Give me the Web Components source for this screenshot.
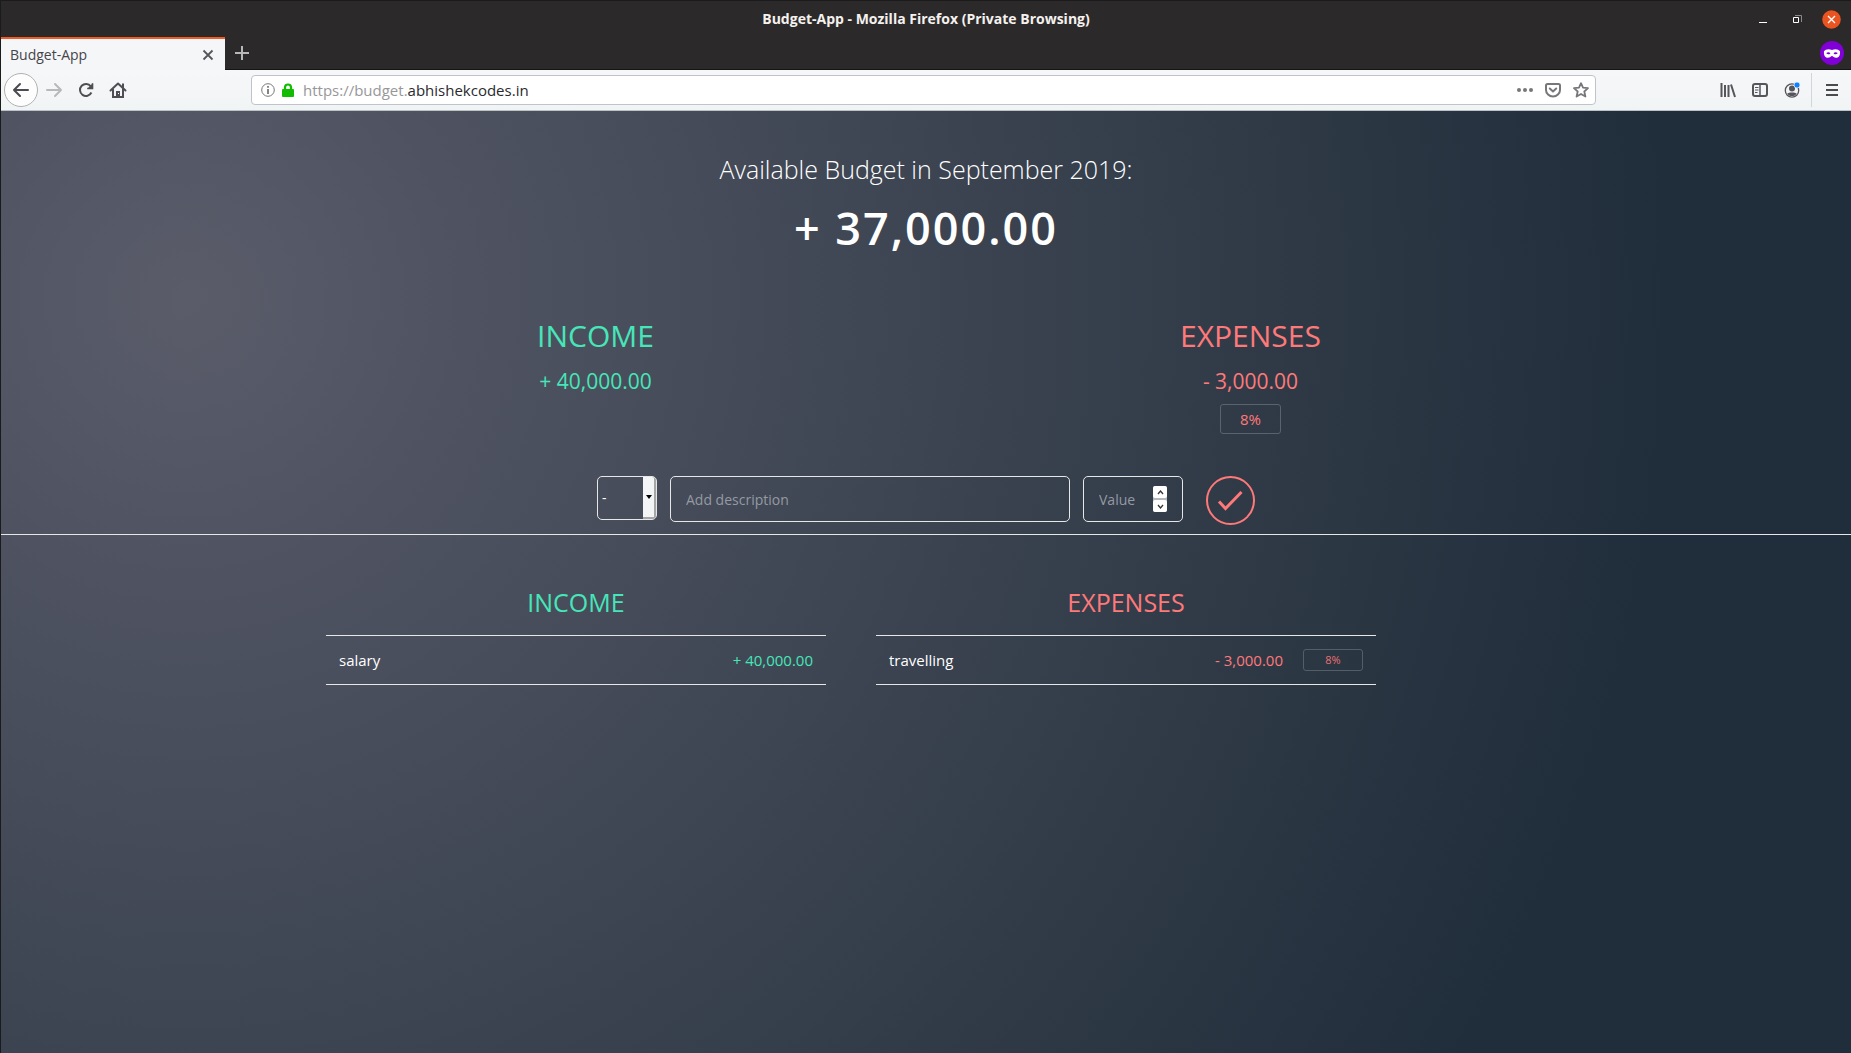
<!DOCTYPE html>
<html lang="en">
<head>
<meta charset="utf-8">
<title>Budget-App</title>
<style>
  html, body { margin: 0; }
  body { min-height: 100vh; display: flex; font-family: "Open Sans", "Noto Sans", sans-serif; }
</style>
</head>
<body>
<browser-window>
  <budget-app></budget-app>
</browser-window>

<script>
const define = (name, html, setup) => {
  const tpl = document.createElement('template');
  tpl.innerHTML = html;
  customElements.define(name, class extends HTMLElement {
    constructor() {
      super();
      this.attachShadow({ mode: 'open' }).append(tpl.content.cloneNode(true));
    }
    connectedCallback() { if (setup) setup(this, this.shadowRoot); }
  });
};

const reset = `
  *, *::before, *::after { box-sizing: border-box; }
  button, input, select { font: inherit; color: inherit; margin: 0; padding: 0; border: 0; background: none; outline: 0; }
  button { display: flex; align-items: center; justify-content: center; }
  svg { display: block; }
  h1, h2, p, ul { margin: 0; padding: 0; font-weight: 400; }
`;

/* Title bar: window caption and window controls */
define('window-titlebar', `
<style>${reset}
  :host { display: grid; grid-template-columns: 1fr auto 1fr; align-items: center; height: 36px; padding: 0 10px; color: #f4f1ee; }
  h1 { grid-column: 2; font: 700 14px/20px "Open Sans", "Noto Sans", sans-serif; }
  .controls { display: flex; justify-content: flex-end; gap: 15px; }
  button { width: 19px; height: 19px; }
</style>
<h1><slot></slot></h1>
<div class="controls">
  <button aria-label="Minimize"><svg width="19" height="19"><path d="M5 12.5h8" stroke="#fff"/></svg></button>
  <button aria-label="Restore"><svg width="19" height="19" fill="none"><path d="M7 5.500h6.500v6.500" stroke="#8b8989"/><path d="M5.500 7.500h5v5h-5z" stroke="#fff"/></svg></button>
  <button aria-label="Close"><svg width="19" height="19"><circle cx="9.500" cy="9.500" r="9.300" fill="#e95420"/><path d="M6 6l7 7M13 6l-7 7" stroke="#fff" stroke-width="1.300"/></svg></button>
</div>`);

define('tab-strip', `
<style>${reset}
  :host { display: flex; align-items: stretch; height: 33px; border-bottom: 1px solid #161515; padding-right: 7px; }
  .tab { display: flex; align-items: center; justify-content: space-between; width: 224px; margin-bottom: -1px; padding: 0 11px 0 9px; background: #f5f6f8; border-top: 2px solid #f15a24; color: #45454a; font-size: 14px; line-height: 20px; }
  .add { width: 34px; }
  .mask { margin-left: auto; width: 24px; }
</style>
<div class="tab"><slot></slot><button aria-label="Close tab"><svg width="12" height="12"><path d="M1.500 1.500l9 9M10.500 1.500l-9 9" stroke="#55565a" stroke-width="1.800"/></svg></button></div>
<button class="add" aria-label="New tab"><svg width="14" height="14"><path d="M7 0v14M0 7h14" stroke="#b9b8b8" stroke-width="2"/></svg></button>
<button class="mask" aria-label="Private browsing"><svg width="24" height="24"><circle cx="12" cy="12" r="12" fill="#8000d7"/><path fill="#fff" fill-rule="evenodd" d="M4 10.200C5.500 8 9 7.600 12 9c3-1.400 6.500-1 8 1.200.400 3.800-1 6.600-3.900 6.600-2 0-3.100-1.900-4.100-1.900s-2.100 1.900-4.100 1.900c-2.900 0-4.300-2.800-3.900-6.600zM6.300 12.300c.800 1.300 3 1.400 4.100.200-.900-1.600-3-1.700-4.100-.200zM13.600 12.500c1.100 1.200 3.300 1.100 4.100-.200-1.100-1.500-3.200-1.400-4.100.200z"/></svg></button>`);

define('nav-toolbar', `
<style>${reset}
  :host { display: flex; align-items: center; height: 41px; padding: 0 3px; background: linear-gradient(#f6f7f9, #f1f4f5); border-bottom: 1px solid #bcc2c6; }
  .nav { display: flex; align-items: center; width: 247px; }
  .nav button { width: 32px; height: 34px; }
  .nav .back { width: 34px; border: 1px solid #b1b1b1; border-radius: 50%; background: #fdfdfe; }
  .url { flex: 1; display: flex; align-items: center; height: 30px; padding: 0 6px 0 9px; background: #fff; border: 1px solid #bfc3ca; border-radius: 4px; }
  .address { flex: 1; padding-left: 9px; font-size: 15px; line-height: 20px; color: #97979a; }
  .address b { font-weight: 400; color: #2a2a2e; }
  .lock { margin-left: 7px; }
  .actions { display: flex; gap: 12px; }
  .tools { display: flex; align-items: center; margin-left: 116px; }
  .tools button { width: 32px; height: 32px; }
  .sep { width: 1px; height: 34px; margin: 0 4px 0 3px; background: #d3d6d9; }
</style>
<div class="nav">
  <button class="back" aria-label="Back"><svg width="18" height="16" fill="none" stroke="#4a4a4f" stroke-width="2" stroke-linecap="round" stroke-linejoin="round"><path d="M2 8h14M8 2L2 8l6 6"/></svg></button>
  <button aria-label="Forward"><svg width="18" height="16" fill="none" stroke="#b8b9bb" stroke-width="2" stroke-linecap="round" stroke-linejoin="round"><path d="M2 8h14M10 2l6 6-6 6"/></svg></button>
  <button aria-label="Reload"><svg width="16" height="16" fill="none" stroke="#4f4f53" stroke-width="2"><path d="M13.400 10.500a6 6 0 1 1-.6-6.200"/><path d="M14.500 1.500v5h-5z" fill="#4f4f53" stroke="none"/><path d="M14.500 1.200v5.300H9.200" stroke-width="1.600"/></svg></button>
  <button aria-label="Home"><svg width="18" height="16"><path d="M1.500 8.500L9 1.500l7.500 7" fill="none" stroke="#4f4f53" stroke-width="2" stroke-linecap="round" stroke-linejoin="round"/><path d="M4 7v8h10V7" fill="none" stroke="#4f4f53" stroke-width="2"/><path d="M7 9h4v6H7z" fill="#4f4f53"/><path d="M13 1.500h2v5h-2z" fill="#4f4f53"/><path d="M9 11.500h1" stroke="#fff"/></svg></button>
</div>
<div class="url">
  <svg width="14" height="14" fill="none" stroke="#77777b"><circle cx="7" cy="7" r="6.300"/><path d="M7 6v5M7 3v1.700" stroke-width="1.800"/></svg>
  <svg class="lock" width="12" height="14"><path d="M3 7V4.500a3 3 0 0 1 6 0V7" fill="none" stroke="#12bc00" stroke-width="2.200"/><rect y="6" width="12" height="8" rx="1" fill="#12bc00"/></svg>
  <div class="address">https://budget.<b>abhishekcodes.in</b></div>
  <div class="actions">
    <button aria-label="Page actions"><svg width="16" height="16" fill="#77777b"><circle cx="2" cy="8" r="2"/><circle cx="8" cy="8" r="2"/><circle cx="14" cy="8" r="2"/></svg></button>
    <button aria-label="Save to Pocket"><svg width="16" height="16" fill="none" stroke="#77777b" stroke-width="2" stroke-linejoin="round"><path d="M2.500 2h11a1.500 1.500 0 0 1 1.500 1.500V8A7 6.500 0 0 1 1 8V3.500A1.500 1.500 0 0 1 2.500 2z"/><path d="M4.800 6.500L8 9.500l3.200-3" stroke-linecap="round"/></svg></button>
    <button aria-label="Bookmark"><svg width="16" height="16" fill="none" stroke="#77777b" stroke-width="1.800" stroke-linejoin="round"><path d="M8 1.200l2 4.500 5 .5-3.700 3.300 1.100 5L8 12l-4.400 2.500 1.100-5L1 6.200l5-.5z"/></svg></button>
  </div>
</div>
<div class="tools">
  <button aria-label="Library"><svg width="16" height="16" fill="none" stroke="#55555a" stroke-width="2"><path d="M1.500 1v14M5 3v12M8.500 3v12M11 2.500L15 15"/></svg></button>
  <button aria-label="Sidebars"><svg width="16" height="16" fill="none" stroke="#55555a" stroke-width="2"><rect x="1" y="2" width="14" height="12" rx="2"/><path d="M8 2v12" stroke-width="1.500"/><path d="M3 5.500h3.500M3 8h3.500M3 10.500h2.500" stroke-width="1"/></svg></button>
  <button aria-label="Account"><svg width="16" height="16"><circle cx="8" cy="8.500" r="6.700" fill="none" stroke="#55555a" stroke-width="1.300"/><circle cx="8" cy="6.500" r="3" fill="#55555a"/><path d="M3.200 11.500c1.500-1.500 8-1.500 9.600 0-1.500 3.300-8 3.500-9.600 0z" fill="#55555a"/><circle cx="13" cy="3" r="3" fill="#0a84ff" stroke="#f5f6f8" stroke-width=".7"/></svg></button>
  <span class="sep"></span>
  <button aria-label="Menu"><svg width="12" height="12" stroke="#4a4a4f" stroke-width="2"><path d="M0 1h12M0 6h12M0 11h12"/></svg></button>
</div>`);

define('browser-window', `
<style>${reset}
  :host { flex: 1; display: flex; flex-direction: column; min-height: 100vh; box-sizing: border-box; border: solid #1c1b1b; border-width: 1px 0 0 1px; background: #2c292a; }
  ::slotted(*) { flex: 1; }
</style>
<window-titlebar>Budget-App - Mozilla Firefox (Private Browsing)</window-titlebar>
<tab-strip>Budget-App</tab-strip>
<nav-toolbar></nav-toolbar>
<slot></slot>`);

define('percent-badge', `
<style>
  :host { display: flex; align-items: center; justify-content: center; box-sizing: border-box; width: 61px; height: 30px; border: 1px solid #59636d; border-radius: 3px; font-size: 15px; line-height: 20px; }
  :host([small]) { width: 60px; height: 22px; font-size: 11px; line-height: 16px; opacity: .9; }
</style><slot></slot>`);

define('total-column', `
<style>${reset}
  :host { flex: 1; display: flex; flex-direction: column; align-items: center; color: var(--tone); }
  h2 { font-size: 30px; line-height: 40px; }
  p { margin-top: 11px; font-size: 21px; line-height: 28px; }
  ::slotted(percent-badge) { margin-top: 9px; }
</style>
<h2><slot name="title"></slot></h2>
<p><slot name="amount"></slot></p>
<slot></slot>`);

define('budget-summary', `
<style>${reset}
  :host { display: block; padding-top: 41px; color: #fff; }
  .title { text-align: center; font-weight: 300; font-size: 25px; line-height: 34px; }
  .value { margin-top: 11px; text-align: center; font-weight: 600; font-size: 45px; line-height: 62px; letter-spacing: 2px; }
  .totals { display: flex; max-width: 1316px; padding-right: 6px; margin: 57px auto 0; }
</style>
<h1 class="title">Available Budget in September 2019:</h1>
<p class="value">+ 37,000.00</p>
<div class="totals">
  <total-column style="--tone: var(--income)"><span slot="title">INCOME</span><span slot="amount">+ 40,000.00</span></total-column>
  <total-column style="--tone: var(--expense)"><span slot="title">EXPENSES</span><span slot="amount">- 3,000.00</span><percent-badge>8%</percent-badge></total-column>
</div>`);

define('entry-form', `
<style>${reset}
  :host { display: block; margin-top: 42px; padding-bottom: 9px; border-bottom: 1px solid #e7e7e7; }
  form { display: flex; justify-content: center; align-items: flex-start; gap: 13px; font-size: 14px; line-height: 20px; color: #fff; }
  .type { display: flex; width: 60px; height: 44px; border: 1px solid #e7e7e7; border-radius: 5px; overflow: hidden; }
  select { flex: 1; min-width: 0; padding-left: 4px; appearance: none; }
  .arrow { display: flex; align-items: center; justify-content: center; width: 13px; background: #f4f5f6; border: solid #a5a6a6; border-width: 0 2px 2px 0; }
  input { height: 46px; padding: 0 15px; border: 1px solid #e7e7e7; border-radius: 5px; }
  input::placeholder { color: #949aa2; opacity: 1; }
  .description { width: 400px; }
  .value { display: flex; align-items: center; width: 100px; height: 46px; padding: 0 15px; border: 1px solid #e7e7e7; border-radius: 5px; }
  .value input { flex: 1; min-width: 0; height: 44px; padding: 0; border: 0; appearance: textfield; }
  .value input::-webkit-inner-spin-button { display: none; }
  .spin { display: flex; flex-direction: column; gap: 2px; background: #b4b9be; border-radius: 3px; }
  .spin button { width: 14px; height: 12px; background: #fff; border-radius: 2px; }
  .submit { margin-left: 10px; width: 49px; height: 49px; color: var(--expense); }
</style>
<form>
  <div class="type">
    <select aria-label="Type"><option>-</option><option>+</option></select>
    <span class="arrow"><svg width="6" height="4"><path d="M0 0h6L3 4z"/></svg></span>
  </div>
  <input class="description" type="text" aria-label="Description" placeholder="Add description">
  <div class="value">
    <input type="number" aria-label="Value" placeholder="Value">
    <div class="spin">
      <button type="button" aria-label="Increase"><svg width="7" height="5" fill="none" stroke="#333" stroke-width="1.300"><path d="M1 4l2.500-3L6 4"/></svg></button>
      <button type="button" aria-label="Decrease"><svg width="7" height="5" fill="none" stroke="#333" stroke-width="1.300"><path d="M1 1l2.500 3L6 1"/></svg></button>
    </div>
  </div>
  <button class="submit" type="button" aria-label="Add entry"><svg width="49" height="49" fill="none" stroke="currentColor"><circle cx="24.500" cy="24.500" r="23.500" stroke-width="2"/><path d="M13 25.500l6.500 7L35.500 16" stroke-width="3"/></svg></button>
</form>`);

define('entry-row', `
<style>
  :host { display: flex; align-items: center; box-sizing: border-box; min-height: 49px; padding: 0 13px; border-bottom: 1px solid #e7e7e7; font-size: 15px; line-height: 20px; color: #fff; }
  .amount { margin-left: auto; color: var(--tone); }
  ::slotted(percent-badge) { margin-left: 20px; color: var(--tone); }
</style>
<span><slot name="name"></slot></span><span class="amount"><slot name="amount"></slot></span><slot></slot>`);

define('entry-list', `
<style>${reset}
  :host { flex: 1; min-width: 0; }
  h2 { text-align: center; font-size: 25px; line-height: 34px; color: var(--tone); }
  .rows { margin-top: 16px; border-top: 1px solid #e7e7e7; }
</style>
<h2><slot name="title"></slot></h2>
<div class="rows"><slot></slot></div>`);

define('budget-app', `
<style>${reset}
  :host { --income: #46e6b9; --expense: #ff7979; display: block; background: radial-gradient(circle farthest-corner at 10% 20%, rgb(90,92,106) 0%, rgb(32,45,58) 81.3%); }
  .lists { display: flex; gap: 50px; max-width: 1200px; padding: 50px 150px 0 0; margin: 0 auto; }
</style>
<budget-summary></budget-summary>
<entry-form></entry-form>
<div class="lists">
  <entry-list style="--tone: var(--income)"><span slot="title">INCOME</span>
    <entry-row><span slot="name">salary</span><span slot="amount">+ 40,000.00</span></entry-row>
  </entry-list>
  <entry-list style="--tone: var(--expense)"><span slot="title">EXPENSES</span>
    <entry-row><span slot="name">travelling</span><span slot="amount">- 3,000.00</span><percent-badge small>8%</percent-badge></entry-row>
  </entry-list>
</div>`);
</script>
</body>
</html>
